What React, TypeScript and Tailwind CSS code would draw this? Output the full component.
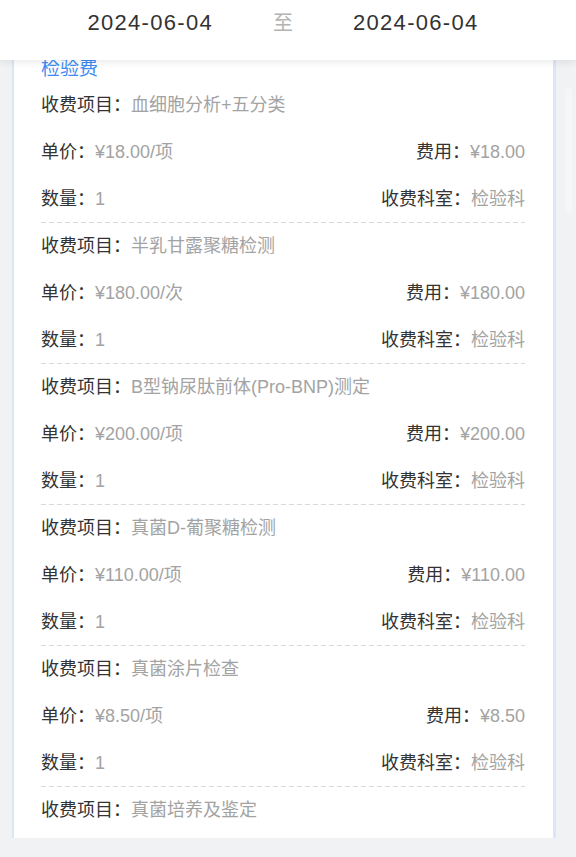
import React from "react";

type Item = { name: string; price: string; fee: string; qty: string; dept: string };

const items: Item[] = [
  { name: "血细胞分析+五分类", price: "¥18.00/项", fee: "¥18.00", qty: "1", dept: "检验科" },
  { name: "半乳甘露聚糖检测", price: "¥180.00/次", fee: "¥180.00", qty: "1", dept: "检验科" },
  { name: "B型钠尿肽前体(Pro-BNP)测定", price: "¥200.00/项", fee: "¥200.00", qty: "1", dept: "检验科" },
  { name: "真菌D-葡聚糖检测", price: "¥110.00/项", fee: "¥110.00", qty: "1", dept: "检验科" },
  { name: "真菌涂片检查", price: "¥8.50/项", fee: "¥8.50", qty: "1", dept: "检验科" },
  { name: "真菌培养及鉴定", price: "¥60.00/项", fee: "¥60.00", qty: "1", dept: "检验科" },
];

function Field({ label, value }: { label: string; value: string }) {
  return (
    <span className="whitespace-nowrap">
      <span className="text-[#333333]">{label}：</span>
      <span className="text-[#a3a3a3]">{value}</span>
    </span>
  );
}

export default function App() {
  const font = { fontFamily: '"Liberation Sans", "Noto Sans CJK SC", sans-serif' };
  return (
    <div className="h-[857px] w-[576px] overflow-hidden bg-[#f1f2f4] flex flex-col" style={font}>
      <header className="relative z-10 h-[60px] shrink-0 bg-white shadow-[0_2px_8px_rgba(0,0,0,0.09)] flex justify-center items-start pt-[12px] pr-[10px] gap-[60px]">
        <span className="text-[22px] leading-[22px] tracking-[1.3px] text-[#333333]">2024-06-04</span>
        <span className="text-[20px] leading-[22px] text-[#b3b3b3]">至</span>
        <span className="text-[22px] leading-[22px] tracking-[1.3px] text-[#333333]">2024-06-04</span>
      </header>
      <div className="h-[778px] shrink-0 overflow-hidden flex">
        <div className="ml-[12px] w-[544px] -mt-[5px] bg-white border-l-2 border-r-[3px] border-[#dbe6f8] pl-[27px] pr-[28px] text-[18px]">
          <div className="h-[27px] pt-[2px] leading-[24px] text-[19px] text-[#3e8bf3]">检验费</div>
          {items.map((it, i) => (
            <div key={i}>
              <div className="h-[47px] flex items-center">
                <Field label="收费项目" value={it.name} />
              </div>
              <div className="h-[47px] flex items-center justify-between">
                <Field label="单价" value={it.price} />
                <Field label="费用" value={it.fee} />
              </div>
              <div className="h-[46px] flex items-center justify-between">
                <Field label="数量" value={it.qty} />
                <Field label="收费科室" value={it.dept} />
              </div>
              <div className="h-px bg-[linear-gradient(to_right,#d9d9d9_60%,transparent_60%)] bg-[length:8px_1px] bg-repeat-x"></div>
            </div>
          ))}
        </div>
        <div className="w-[20px] flex justify-end pr-[4px]">
          <div className="mt-[28px] w-[7px] h-[125px] bg-[#f5f6f8] rounded-sm"></div>
        </div>
      </div>
    </div>
  );
}
